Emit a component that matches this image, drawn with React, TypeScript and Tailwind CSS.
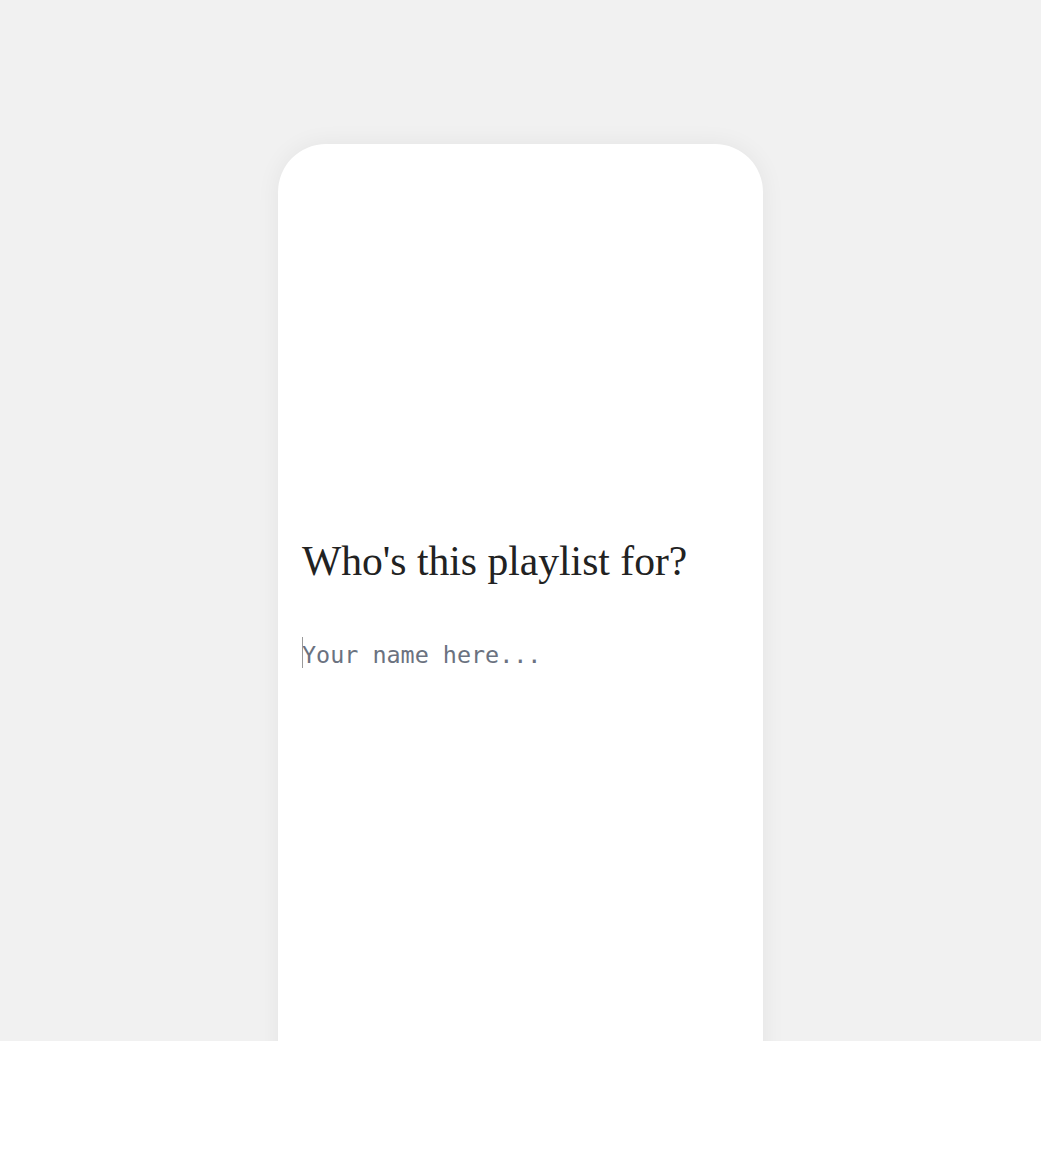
export default function App() {
  return (
    <div className="w-full bg-white">
      <div className="h-[1041px] overflow-hidden bg-[#f1f1f1] pt-[144px]">
        <div className="mx-auto flex h-[960px] w-[485px] flex-col rounded-t-[48px] bg-white px-6 pt-[393px] shadow-[0_0_24px_rgba(0,0,0,0.06)]">
          <h1 className="font-['Liberation_Serif',serif] text-[41.6px] leading-[48px] text-[#222]">
            Who's this playlist for?
          </h1>
          <div className="relative mt-[54px]">
            <span className="absolute left-0 top-[-2px] h-[31px] w-px bg-[#9a9a9a]" />
            <input
              type="text"
              placeholder="Your name here..."
              className="w-full bg-transparent font-['DejaVu_Sans_Mono',monospace] text-[23.4px] leading-[32px] text-[#222] outline-none placeholder:text-[#6b7280]"
            />
          </div>
        </div>
      </div>
    </div>
  );
}
